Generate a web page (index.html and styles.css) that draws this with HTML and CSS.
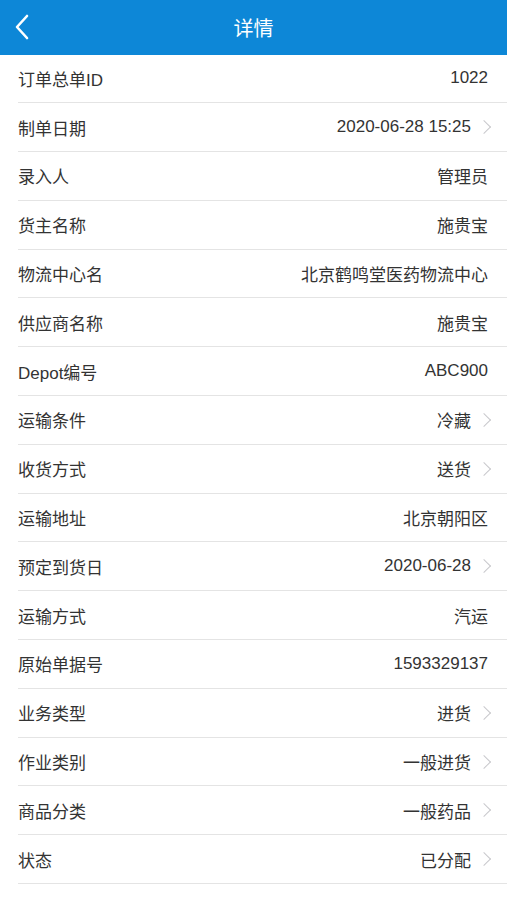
FILE: index.html
```html
<!DOCTYPE html>
<html lang="zh">
<head>
<meta charset="utf-8">
<title>详情</title>
<link rel="stylesheet" href="styles.css">
</head>
<body>
<header class="nav">
  <span class="back"><svg width="16" height="26" viewBox="0 0 16 26"><path d="M13 2 L3 13 L13 24" fill="none" stroke="#fff" stroke-width="2.6" stroke-linecap="round" stroke-linejoin="round"/></svg></span>
  <h1 class="title">详情</h1>
</header>
<ul class="list">
  <li class="row"><span class="label">订单总单ID</span><span class="value">1022</span></li>
  <li class="row"><span class="label">制单日期</span><span class="value">2020-06-28 15:25</span><i class="arrow"></i></li>
  <li class="row"><span class="label">录入人</span><span class="value">管理员</span></li>
  <li class="row"><span class="label">货主名称</span><span class="value">施贵宝</span></li>
  <li class="row"><span class="label">物流中心名</span><span class="value">北京鹤鸣堂医药物流中心</span></li>
  <li class="row"><span class="label">供应商名称</span><span class="value">施贵宝</span></li>
  <li class="row"><span class="label">Depot编号</span><span class="value">ABC900</span></li>
  <li class="row"><span class="label">运输条件</span><span class="value">冷藏</span><i class="arrow"></i></li>
  <li class="row"><span class="label">收货方式</span><span class="value">送货</span><i class="arrow"></i></li>
  <li class="row"><span class="label">运输地址</span><span class="value">北京朝阳区</span></li>
  <li class="row"><span class="label">预定到货日</span><span class="value">2020-06-28</span><i class="arrow"></i></li>
  <li class="row"><span class="label">运输方式</span><span class="value">汽运</span></li>
  <li class="row"><span class="label">原始单据号</span><span class="value">1593329137</span></li>
  <li class="row"><span class="label">业务类型</span><span class="value">进货</span><i class="arrow"></i></li>
  <li class="row"><span class="label">作业类别</span><span class="value">一般进货</span><i class="arrow"></i></li>
  <li class="row"><span class="label">商品分类</span><span class="value">一般药品</span><i class="arrow"></i></li>
  <li class="row"><span class="label">状态</span><span class="value">已分配</span><i class="arrow"></i></li>
</ul>
</body>
</html>
```
FILE: styles.css
```css
* { box-sizing: border-box; }
html, body {
  margin: 0;
  padding: 0;
  background: #fff;
  font-family: "Liberation Sans", "Noto Sans CJK SC", sans-serif;
  color: #333;
}
.nav {
  height: 54.5px;
  background: #0d87d7;
  display: flex;
  align-items: center;
  justify-content: center;
  position: relative;
}
.back {
  position: absolute;
  left: 14px;
  top: 14px;
  display: flex;
}
.title {
  margin: 0;
  font-size: 20px;
  font-weight: normal;
  color: #fff;
}
.list {
  list-style: none;
  margin: 0;
  padding: 0;
}
.row {
  margin-left: 18px;
  padding-right: 16px;
  height: 48.8px;
  border-bottom: 1px solid #e4e4e4;
  display: flex;
  align-items: center;
  font-size: 17px;
}
.label {
  flex: 1;
  color: #333;
}
.value {
  color: #333;
  padding-right: 3px;
}
.arrow {
  width: 10px;
  height: 10px;
  border-top: 1.5px solid #c8c8cc;
  border-right: 1.5px solid #c8c8cc;
  transform: rotate(45deg);
  margin-left: 5px;
  margin-right: 2px;
}
```
